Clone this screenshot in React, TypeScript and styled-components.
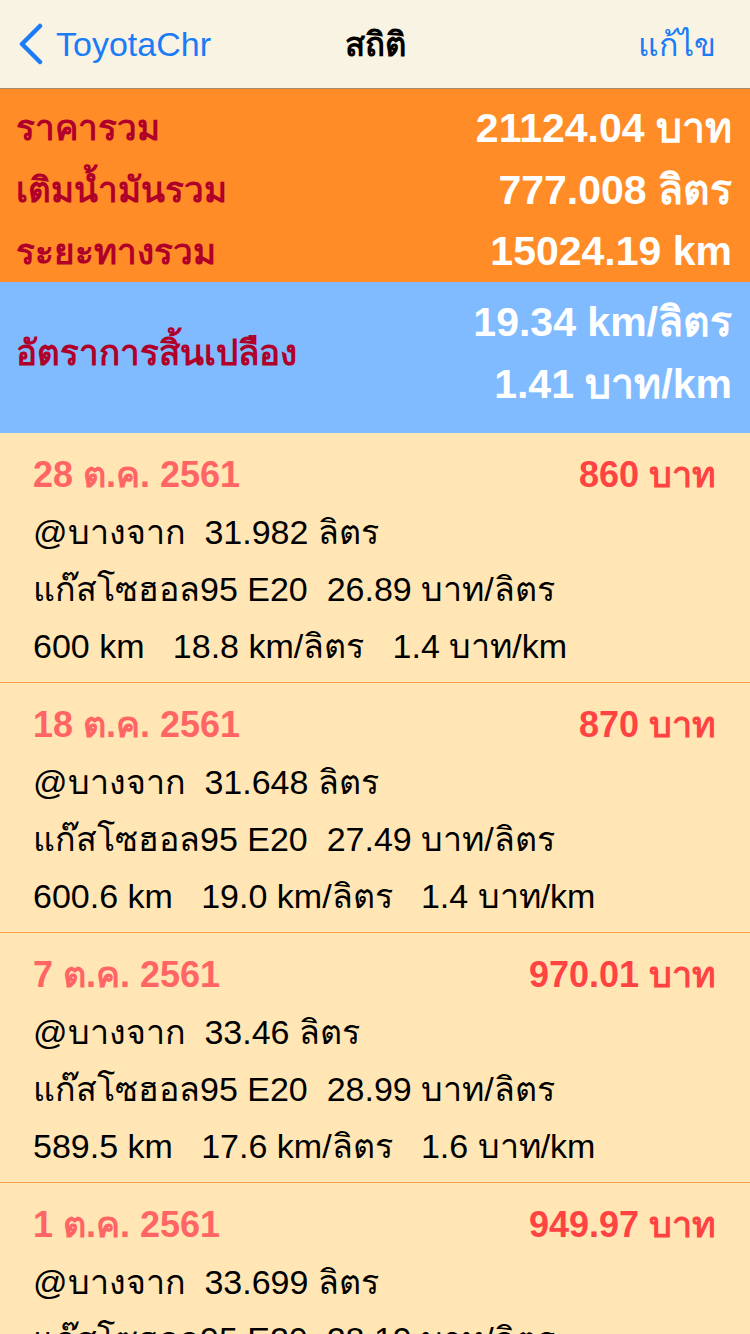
import React from "react";
import styled, { createGlobalStyle } from "styled-components";

const GlobalStyle = createGlobalStyle`
  html, body { margin: 0; padding: 0; background: #ffe6b4; }
  body { font-family: "Liberation Sans", Arial, sans-serif; -webkit-font-smoothing: antialiased; }
  * { box-sizing: border-box; }
`;

const Screen = styled.div`
  width: 750px;
  height: 1334px;
  overflow: hidden;
  background: #ffe6b4;
  display: flex;
  flex-direction: column;
`;

const NavBar = styled.header`
  height: 89px;
  flex: none;
  display: grid;
  grid-template-columns: 1fr auto 1fr;
  align-items: center;
  padding: 0 34px;
  background: #f9f3e3;
  border-bottom: 1px solid #a88a6c;
`;

const BackButton = styled.div`
  display: flex;
  align-items: center;
  gap: 12px;
  margin-left: -16px;
  color: #1a7cf7;
  font-size: 34px;
  justify-self: start;
`;

const NavTitle = styled.div`
  font-size: 33px;
  font-weight: 700;
  color: #000;
`;

const NavAction = styled.div`
  justify-self: end;
  color: #1a7cf7;
  font-size: 32px;
`;

const Summary = styled.section<{ $bg: string }>`
  flex: none;
  background: ${(p) => p.$bg};
`;

const TotalsBlock = styled(Summary)`
  padding: 7px 18px 0 16px;
  height: 193px;
`;

const TotalRow = styled.div`
  height: 62px;
  display: flex;
  align-items: center;
  justify-content: space-between;
`;

const Label = styled.div`
  color: #b0002a;
  font-size: 35px;
  font-weight: 700;
`;

const Value = styled.div`
  color: #ffffff;
  font-size: 41px;
  font-weight: 700;
`;

const RateBlock = styled(Summary)`
  height: 151px;
  padding: 0 18px 10px 16px;
  display: flex;
  align-items: center;
  justify-content: space-between;
`;

const RateValues = styled.div`
  display: flex;
  flex-direction: column;
  align-items: flex-end;
`;

const RateLine = styled.div`
  height: 62px;
  display: flex;
  align-items: center;
`;

const List = styled.div`
  display: flex;
  flex-direction: column;
`;

const Card = styled.article`
  flex: none;
  height: 250px;
  padding: 12px 34px 0 33px;
  border-bottom: 1px solid #f5a04a;
`;

const CardHead = styled.div`
  height: 58px;
  display: flex;
  align-items: center;
  justify-content: space-between;
  font-size: 36px;
  font-weight: 700;
`;

const DateText = styled.span`
  color: #ff6565;
`;

const Amount = styled.span`
  color: #ff4343;
`;

const Line = styled.div`
  height: 57px;
  display: flex;
  align-items: center;
  font-size: 34px;
  color: #000;
  white-space: pre;
`;

const Chevron = () => (
  <svg width="26" height="42" viewBox="0 0 26 42">
    <polyline
      points="22,3 4,21 22,39"
      fill="none"
      stroke="#1a7cf7"
      strokeWidth="4.5"
      strokeLinecap="round"
      strokeLinejoin="round"
    />
  </svg>
);

type Entry = {
  date: string;
  amount: string;
  liters: string;
  price: string;
  km: string;
  kmpl: string;
  bpk: string;
};

const entries: Entry[] = [
  { date: "28 ต.ค. 2561", amount: "860 บาท", liters: "31.982", price: "26.89", km: "600", kmpl: "18.8", bpk: "1.4" },
  { date: "18 ต.ค. 2561", amount: "870 บาท", liters: "31.648", price: "27.49", km: "600.6", kmpl: "19.0", bpk: "1.4" },
  { date: "7 ต.ค. 2561", amount: "970.01 บาท", liters: "33.46", price: "28.99", km: "589.5", kmpl: "17.6", bpk: "1.6" },
  { date: "1 ต.ค. 2561", amount: "949.97 บาท", liters: "33.699", price: "28.19", km: "592.4", kmpl: "17.6", bpk: "1.6" },
];

export default function App() {
  return (
    <Screen>
      <GlobalStyle />
      <NavBar>
        <BackButton>
          <Chevron />
          <span>ToyotaChr</span>
        </BackButton>
        <NavTitle>สถิติ</NavTitle>
        <NavAction>แก้ไข</NavAction>
      </NavBar>

      <TotalsBlock $bg="#ff8c27">
        <TotalRow>
          <Label>ราคารวม</Label>
          <Value>21124.04 บาท</Value>
        </TotalRow>
        <TotalRow>
          <Label>เติมน้ำมันรวม</Label>
          <Value>777.008 ลิตร</Value>
        </TotalRow>
        <TotalRow>
          <Label>ระยะทางรวม</Label>
          <Value>15024.19 km</Value>
        </TotalRow>
      </TotalsBlock>

      <RateBlock $bg="#80bbff">
        <Label>อัตราการสิ้นเปลือง</Label>
        <RateValues>
          <RateLine>
            <Value>19.34 km/ลิตร</Value>
          </RateLine>
          <RateLine>
            <Value>1.41 บาท/km</Value>
          </RateLine>
        </RateValues>
      </RateBlock>

      <List>
        {entries.map((e) => (
          <Card key={e.date}>
            <CardHead>
              <DateText>{e.date}</DateText>
              <Amount>{e.amount}</Amount>
            </CardHead>
            <Line>{`@บางจาก  ${e.liters} ลิตร`}</Line>
            <Line>{`แก๊สโซฮอล95 E20  ${e.price} บาท/ลิตร`}</Line>
            <Line>{`${e.km} km   ${e.kmpl} km/ลิตร   ${e.bpk} บาท/km`}</Line>
          </Card>
        ))}
      </List>
    </Screen>
  );
}
